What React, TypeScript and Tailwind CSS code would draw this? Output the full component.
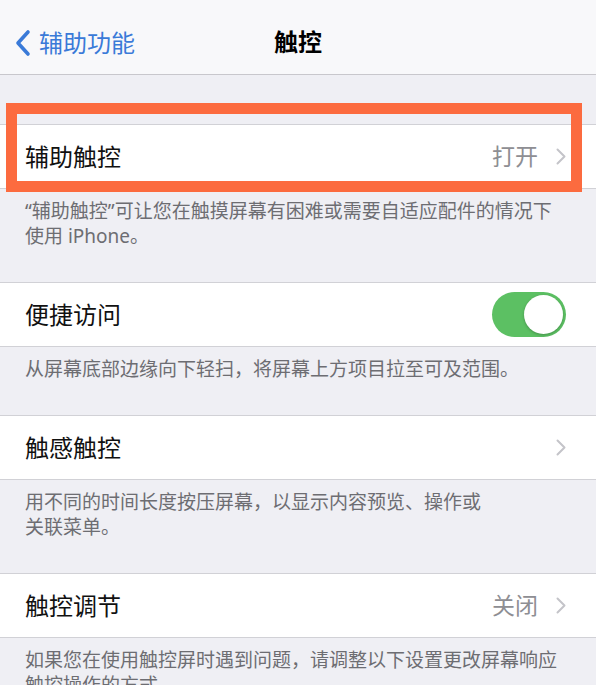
import React from "react";

const Chevron = () => (
  <svg width="10" height="17" viewBox="0 0 10 17" className="shrink-0">
    <polyline
      points="1.5,1.5 8.5,8.5 1.5,15.5"
      fill="none"
      stroke="#c4c4c9"
      strokeWidth="2"
      strokeLinecap="round"
      strokeLinejoin="round"
    />
  </svg>
);

const Toggle = () => (
  <div className="w-[74px] h-[45px] rounded-full bg-[#5cc063] flex items-center justify-end pr-[3px]">
    <div className="w-[39px] h-[39px] rounded-full bg-white shadow-[0_1px_3px_rgba(0,0,0,0.25)]" />
  </div>
);

const Row = ({
  title,
  value,
  chevron,
  toggle,
}: {
  title: string;
  value?: string;
  chevron?: boolean;
  toggle?: boolean;
}) => (
  <div className="h-[65px] bg-white border-y border-[#d1d1d6] flex items-center pl-[25px] pr-[30px]">
    <span className="text-[24px] text-[#111] flex-1">{title}</span>
    {value && <span className="text-[23px] text-[#8e8e93] mr-[18px]">{value}</span>}
    {chevron && <Chevron />}
    {toggle && <Toggle />}
  </div>
);

const Note = ({ lines }: { lines: string[] }) => (
  <div className="pt-[10px] pb-[33px] px-[25px] text-[19px] leading-[25px] text-[#6d6d72] whitespace-nowrap">
    {lines.map((l) => (
      <div key={l}>{l}</div>
    ))}
  </div>
);

export default function App() {
  return (
    <div
      className="w-[615px] h-[685px] overflow-hidden bg-white"
      style={{ fontFamily: '"Noto Sans", "Noto Sans CJK SC", sans-serif' }}
    >
      <div className="w-[596px] h-full bg-[#efeff4]">
        {/* nav bar */}
        <div className="h-[75px] bg-[#f8f8fa] border-b border-[#c8c7cc] relative flex items-center justify-center">
          <div className="absolute left-[14px] top-[29px] flex items-center">
            <svg width="18" height="28" viewBox="0 0 18 28">
              <polyline
                points="14,3 4,14 14,25"
                fill="none"
                stroke="#3a7ad8"
                strokeWidth="3.6"
                strokeLinecap="round"
                strokeLinejoin="round"
              />
            </svg>
            <span className="ml-[7px] text-[24px] leading-[28px] text-[#3a7ad8]">辅助功能</span>
          </div>
          <span className="text-[24px] font-semibold text-black mt-[10px]">触控</span>
        </div>

        <div className="h-[49px]" />
        <div className="relative">
          <Row title="辅助触控" value="打开" chevron />
          <div className="absolute left-[6px] right-[14px] top-[-21px] bottom-[-3px] border-[11px] border-[#fc6b3f]" />
        </div>
        <Note
          lines={[
            "“辅助触控”可让您在触摸屏幕有困难或需要自适应配件的情况下",
            "使用 iPhone。",
          ]}
        />

        <Row title="便捷访问" toggle />
        <Note lines={["从屏幕底部边缘向下轻扫，将屏幕上方项目拉至可及范围。"]} />

        <Row title="触感触控" chevron />
        <Note lines={["用不同的时间长度按压屏幕，以显示内容预览、操作或", "关联菜单。"]} />

        <Row title="触控调节" value="关闭" chevron />
        <Note
          lines={[
            "如果您在使用触控屏时遇到问题，请调整以下设置更改屏幕响应",
            "触控操作的方式。",
          ]}
        />
      </div>
    </div>
  );
}
